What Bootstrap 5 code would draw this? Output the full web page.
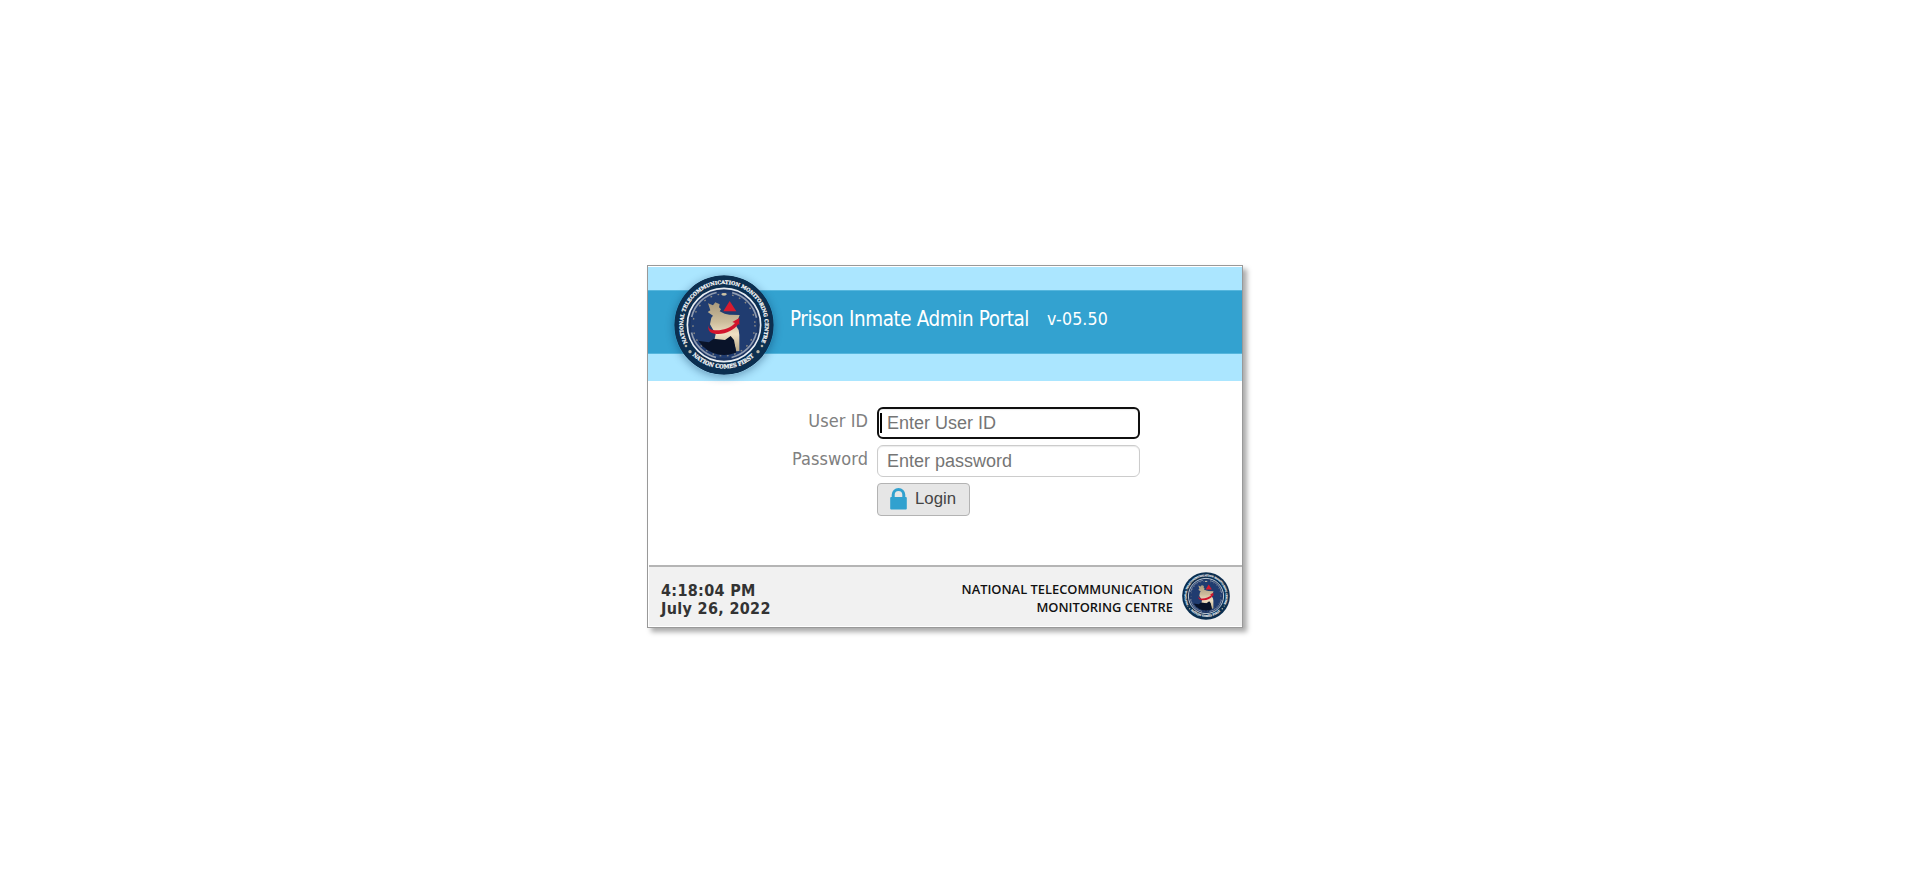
<!DOCTYPE html>
<html lang="en">
<head>
<meta charset="utf-8">
<title>Prison Inmate Admin Portal</title>
<link rel="stylesheet" href="https://cdn.jsdelivr.net/npm/bootstrap@5.3.0/dist/css/bootstrap.min.css">
<style>
body{font-family:"DejaVu Sans Condensed","DejaVu Sans",sans-serif;background:#fff;padding-top:265px;min-height:100vh}
.login-box{width:596px;height:363px;margin-left:647px;border:1px solid #999;box-shadow:4px 4px 5px #aaa;padding-top:1px;background:#fff}
.banner{height:114px;background:#abe6ff;padding-top:23px}
.band{height:64px;background:#33a2d0;border-top:1px solid #55b6dd;border-bottom:1px solid #55b6dd;padding-left:26px;color:#fff}
.emblem{width:100px;height:100px;flex:none;border-radius:50%;box-shadow:0 2px 8px rgba(0,40,80,.4);margin-top:6px}
.app-title{font-size:20.4px;line-height:24px;margin:-7px 0 0 16px;letter-spacing:-.38px;white-space:pre}
.app-version{font-size:17.6px;line-height:24px;margin:-6px 0 0 18px;letter-spacing:.15px}
.login-form{height:184px;padding-top:26px}
.line{height:32px;margin-bottom:6px}
.line label{width:220px;text-align:right;margin-right:9px;color:#808080;font-size:18px;line-height:28px;letter-spacing:.05px}
.entry{width:263px;height:32px;padding:0 9px;border:1px solid #ccc;border-radius:6px;font:18px "Liberation Sans",Arial,sans-serif;color:#333;box-shadow:inset 0 1px 1px rgba(0,0,0,.08)}
.entry:focus{box-shadow:none;border-color:#ccc}
.entry::placeholder{color:#757575;opacity:1}
.entry.active{border:2px solid #101010;padding-left:8px}
.caret{position:absolute;left:3px;top:6px;width:2px;height:20px;background:#000}
.login-btn{margin-left:229px;width:93px;height:33px;background:#e6e6e6;border:1px solid #b3b3b3;border-radius:4px;color:#444;font:16.8px "Liberation Sans",Arial,sans-serif;padding:0 0 2px 12px}
.foot{height:61px;background:#f1f1f1;border-top:2px solid #b5b5b5;margin-left:1px;padding:0 12px 2px 12px}
.clock{font-size:16px;line-height:18px;font-weight:700;color:#333;padding-top:8px;letter-spacing:.33px}
.org{font:600 12.9px/18px "Open Sans","Noto Sans",sans-serif;color:#111;text-align:right;margin-right:9px;padding-top:4px}
</style>
</head>
<body>
<main class="login-box d-flex flex-column">
 <header class="banner">
  <div class="band d-flex align-items-center">
   <svg class="emblem" viewBox="0 0 300 300">
    <defs>
     <linearGradient id="land" x1="0" y1="0" x2="0" y2="1"><stop offset="0" stop-color="#a8997c"/><stop offset=".4" stop-color="#cdbd9c"/><stop offset=".65" stop-color="#efe0c4"/><stop offset="1" stop-color="#b9a884"/></linearGradient>
     <path id="arcTop" d="M39.500 204A123 123 0 1 1 260.500 204"/>
     <path id="arcBottom" d="M42 225A133 133 0 0 0 258 225"/>
     <clipPath id="disc"><circle cx="150" cy="150" r="90"/></clipPath>
    </defs>
    <g id="seal">
     <circle cx="150" cy="150" r="149" fill="#0c2f50"/>
     <circle cx="150" cy="150" r="110" fill="#1c3562" stroke="#e7edf3" stroke-width="5"/>
     <circle cx="150" cy="150" r="100" fill="#203c70" stroke="#8f9bb0" stroke-width="5" stroke-dasharray="110 47.080" stroke-dashoffset="-24"/>
     <circle cx="150" cy="150" r="93" fill="none" stroke="#8e8b84" stroke-width="4" stroke-dasharray="5 17"/>
     <ellipse cx="150" cy="58" rx="8" ry="4" fill="#ccc2a4"/>
     <path d="M102 85L117 91L124 82L137 88L135 97L141 103L137 109L152 116L166 119L197 120L190 139L186 152L194 165L196 180L196 228L187 229L181 208L171 195L120 199L125 178L108 148L112 128L117 122L101 111L109 106Z" fill="url(#land)"/>
     <g clip-path="url(#disc)"><path d="M60 196L105 202L119 191L153 195L170 183L180 195L186 228L190 255L95 255Z" fill="#091329"/></g>
     <path d="M106 149C99 159 104 174 122 176C152 180 180 166 193 147L196 151V129L175 141L183 144C168 161 138 169 117 165C106 163 102 157 106 149Z" fill="#d2142c"/>
     <path d="M167 78l20 31h-39z" fill="#d81b2f"/>
     <g fill="#f5f6f7" font-family="DejaVu Serif" font-weight="700" stroke="#f5f6f7" stroke-width=".8">
      <text font-size="15"><textPath href="#arcTop" textLength="495" lengthAdjust="spacingAndGlyphs">NATIONAL TELECOMMUNICATION MONITORING CENTRE</textPath></text>
      <text font-size="17"><textPath href="#arcBottom" startOffset="20" textLength="206" lengthAdjust="spacingAndGlyphs">NATION COMES FIRST</textPath></text>
     </g>
     <g fill="#b9b5a4"><circle cx="36" cy="213" r="4"/><circle cx="48" cy="230" r="5"/><circle cx="264" cy="213" r="4"/><circle cx="252" cy="230" r="5"/></g>
    </g>
   </svg>
   <span class="app-title">Prison Inmate Admin Portal</span>
   <span class="app-version">v-05.50</span>
  </div>
 </header>
 <form class="login-form">
  <div class="line d-flex"><label for="uid">User ID</label><div class="position-relative"><input id="uid" class="entry active d-block" placeholder="Enter User ID"><span class="caret"></span></div></div>
  <div class="line d-flex"><label for="pw">Password</label><input id="pw" type="password" class="entry" placeholder="Enter password"></div>
  <button type="button" class="login-btn d-flex align-items-center">
   <svg width="17" height="22" viewBox="0 0 17 22" class="me-2"><path d="M3.200 10V6.800a5.300 5.300 0 0 1 10.600 0V10" fill="none" stroke="#31a1cf" stroke-width="3"/><rect x=".2" y="9" width="16.600" height="12.500" rx="1" fill="#31a1cf"/></svg>Login
  </button>
 </form>
 <footer class="foot d-flex align-items-center">
  <div class="clock me-auto">4:18:04 PM<br>July 26, 2022</div>
  <div class="org">NATIONAL TELECOMMUNICATION<br>MONITORING CENTRE</div>
  <svg width="48" height="48" viewBox="0 0 300 300"><use href="#seal"/></svg>
 </footer>
</main>
<script src="https://cdn.jsdelivr.net/npm/bootstrap@5.3.0/dist/js/bootstrap.bundle.min.js"></script>
</body>
</html>
